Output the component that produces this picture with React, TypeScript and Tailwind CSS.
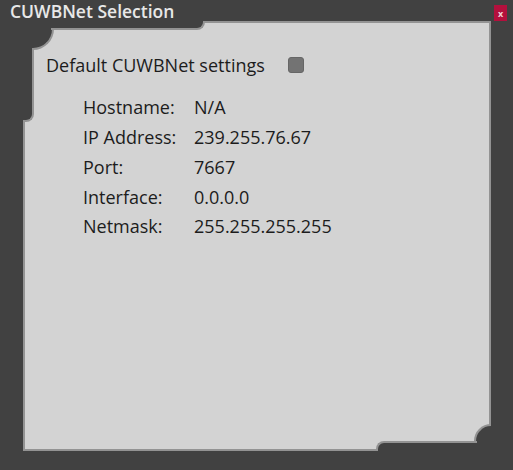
import { useState } from "react";

const rows: [string, string][] = [
  ["Hostname:", "N/A"],
  ["IP Address:", "239.255.76.67"],
  ["Port:", "7667"],
  ["Interface:", "0.0.0.0"],
  ["Netmask:", "255.255.255.255"],
];

export default function App() {
  const [useDefault, setUseDefault] = useState(false);

  return (
    <div
      className="w-[513px] h-[470px] bg-[#414141] flex flex-col overflow-hidden"
      style={{ fontFamily: '"Open Sans", "Noto Sans", sans-serif' }}
    >
      {/* Title bar */}
      <div className="relative z-10 h-[21px] flex items-center justify-between pl-[10px] pr-[6px]">
        <span className="text-[17.5px] font-semibold leading-none text-[#e8e8e8] pt-[3px]">
          CUWBNet Selection
        </span>
        <button className="mt-[5px] w-[13px] h-[16px] bg-[#b3103d] text-[#f0d0d8] text-[9px] font-bold leading-none flex items-center justify-center">
          x
        </button>
      </div>

      {/* Panel */}
      <div className="relative ml-[23px] mr-[22px] h-[430px] bg-[#d3d3d3] border-2 border-[#939393]">
        {/* top-left notch */}
        <div className="absolute -left-[2px] -top-[2px] w-[31px] h-[29px] bg-[#414141] border-r-2 border-b-2 border-[#939393] rounded-br-[21px]" />
        <div className="absolute left-[26px] -top-[2px] w-[154px] h-[9px] bg-[#414141] border-b-2 border-r-2 border-[#939393] rounded-br-[8px]" />
        <div className="absolute -left-[2px] top-[25px] w-[11px] h-[74px] bg-[#414141] border-r-2 border-b-2 border-[#939393] rounded-br-[8px]" />

        {/* bottom-right notch */}
        <div className="absolute -right-[2px] -bottom-[2px] w-[17px] h-[27px] bg-[#414141] border-l-2 border-t-2 border-[#939393] rounded-tl-[17px]" />
        <div className="absolute right-[12px] -bottom-[2px] w-[101px] h-[10px] bg-[#414141] border-l-2 border-t-2 border-[#939393] rounded-tl-[8px]" />

        <div className="relative pt-[29px] pl-[21px] text-[18px] font-medium text-[#1c1c1c]">
          <div className="flex items-center gap-[23px] h-[26px]">
            <span>Default CUWBNet settings</span>
            <button
              onClick={() => setUseDefault(!useDefault)}
              className={`w-[16px] h-[16px] rounded-[3px] border border-[#666] ${
                useDefault ? "bg-[#4a4a4a]" : "bg-[#737373]"
              }`}
            />
          </div>

          <div className="mt-[15px] pl-[37px] flex flex-col">
            {rows.map(([label, value]) => (
              <div key={label} className="flex items-center h-[29.75px]">
                <span className="w-[111px]">{label}</span>
                <span>{value}</span>
              </div>
            ))}
          </div>
        </div>
      </div>
    </div>
  );
}
